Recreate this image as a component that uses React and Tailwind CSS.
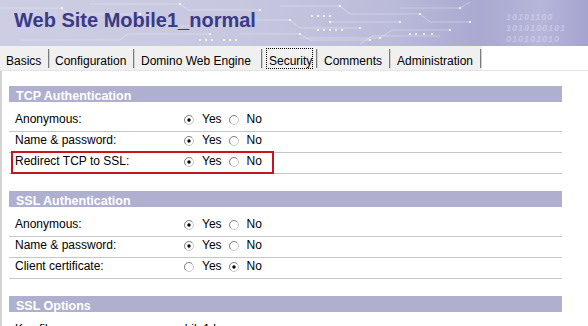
import React from 'react';

const SANS = "font-['Liberation_Sans',Arial,sans-serif]";

function Radio({ on }) {
  return (
    <svg width="10" height="10" viewBox="0 0 10 10" className="block">
      <circle cx="5" cy="5" r="4.5" fill="#fff" stroke="#c8c8c8" strokeWidth="1" />
      <path d="M1.8 8.2 A4.5 4.5 0 0 1 8.2 1.8" fill="none" stroke="#8a8a8a" strokeWidth="1" />
      {on && <circle cx="5" cy="5" r="1.7" fill="#000" />}
    </svg>
  );
}

function Circuit() {
  // faint circuit-board pattern in the banner
  const lines = [
    'M0 8 H60 L70 14 H140', 'M90 4 H180 L188 10 H260', 'M20 40 H120 L128 34 H210',
    'M200 20 H290 L300 28 H360', 'M280 6 H340 L350 14 H420 L430 22 H470',
    'M300 38 H380 L392 30 H450', 'M330 22 H400', 'M240 34 H300 L310 40 H370',
    'M150 26 H230', 'M400 8 H460 L470 2', 'M360 44 L372 36 H440',
  ];
  const dots = [
    [62, 8], [140, 14], [180, 4], [260, 10], [210, 34], [290, 20], [360, 28], [340, 6],
    [420, 14], [470, 22], [380, 38], [450, 30], [400, 22], [330, 22], [300, 34], [370, 40],
    [230, 26], [150, 26], [460, 8], [318, 30], [324, 30], [330, 30], [336, 30], [342, 30],
    [312, 16], [318, 16], [324, 16], [330, 16], [410, 34], [416, 34], [424, 34], [432, 34],
    [200, 40], [206, 40], [212, 40], [224, 40], [230, 40], [236, 40],
  ];
  return (
    <svg width="588" height="46" className="absolute left-0 top-0">
      {lines.map((d, i) => (
        <path key={i} d={d} fill="none" stroke="#ffffff" strokeOpacity="0.3" strokeWidth="1" />
      ))}
      {dots.map(([x, y], i) => (
        <rect key={i} x={x - 1} y={y - 1} width="2" height="2" fill="#ffffff" fillOpacity="0.75" />
      ))}
    </svg>
  );
}

function Row({ label, yes, value, marked }) {
  return (
    <div className="relative flex items-start h-[21px] border-b border-[#c6c6c6] text-[12px] text-black">
      <div className="w-[175px] pl-[6px] leading-[17px]">{label}</div>
      {value ? (
        <div className="-ml-[16px] leading-[17px]">{value}</div>
      ) : (
        <div className="flex items-center h-[17px]">
          <Radio on={yes} />
          <span className="ml-[8px] leading-[17px]">Yes</span>
          <span className="ml-[7px]"><Radio on={!yes} /></span>
          <span className="ml-[8px] leading-[17px]">No</span>
        </div>
      )}
      {marked && (
        <div className="absolute -top-[2px] left-[2px] w-[263px] h-[23px] border-2 border-[#c8141c]" />
      )}
    </div>
  );
}

function Section({ title, rows, className = '' }) {
  return (
    <div className={`ml-[7px] w-[553px] ${className}`}>
      <div className="h-[16px] bg-[#afafcf] pl-[7px] pt-[4px] leading-[12px] text-[12.5px] font-bold text-white">
        {title}
      </div>
      <div className="mt-[9px]">
        {rows.map((r) => (
          <Row key={r.label} {...r} />
        ))}
      </div>
    </div>
  );
}

function Sep() {
  return <div className="mt-[3px] h-[19px] w-[2px] border-l border-l-[#7c7c7c] border-r border-r-[#d0d0d0]" />;
}

export default function App() {
  return (
    <div className={`w-[588px] h-[326px] overflow-hidden bg-white ${SANS}`}>
      <div className="relative h-[46px] bg-[linear-gradient(90deg,#cdcde3_0%,#c7c7e0_40%,#bcbcda_65%,#a9a9d1_82%,#b6b6da_92%,#a4a4cf_100%)]">
        <Circuit />
        <div className="absolute right-[22px] top-[12px] text-[9px] italic font-bold leading-[11px] text-white/30 tracking-[1px]">
          <div>10101100</div>
          <div>1010100101</div>
          <div>010101010</div>
        </div>
        <div className="relative pl-[14px] pt-[10px] text-[20px] font-bold leading-[20px] text-[#3a3a86]">
          Web Site Mobile1_normal
        </div>
      </div>

      <div className="h-[25px] border-b border-[#e4e4e4]">
        <div className="inline-flex h-[24px] items-start bg-[#f0f0f0] text-[12px] text-black">
          <div className="w-[48px] pl-[6px] pt-[8px] leading-[14px]">Basics</div>
          <Sep />
          <div className="w-[83px] pl-[5px] pt-[8px] leading-[14px]">Configuration</div>
          <Sep />
          <div className="w-[126px] pl-[6px] pt-[8px] leading-[14px]">Domino Web Engine</div>
          <Sep />
          <div className="w-[53px]">
            <div className="ml-[3px] mt-[2px] h-[21px] w-[47px] border border-dotted border-black pl-[2px] pt-[5px] leading-[14px]">
              Security
            </div>
          </div>
          <Sep />
          <div className="w-[71px] pl-[6px] pt-[8px] leading-[14px]">Comments</div>
          <Sep />
          <div className="w-[89px] pl-[6px] pt-[8px] leading-[14px]">Administration</div>
          <Sep />
        </div>
      </div>

      <div className="border-l-2 border-[#d4d4d4] pt-[15px] pb-[40px]">
        <Section
          title="TCP Authentication"
          rows={[
            { label: 'Anonymous:', yes: true },
            { label: 'Name & password:', yes: true },
            { label: 'Redirect TCP to SSL:', yes: true, marked: true },
          ]}
        />
        <Section
          className="mt-[17px]"
          title="SSL Authentication"
          rows={[
            { label: 'Anonymous:', yes: true },
            { label: 'Name & password:', yes: true },
            { label: 'Client certificate:', yes: false },
          ]}
        />
        <Section
          className="mt-[17px]"
          title="SSL Options"
          rows={[{ label: 'Key file name:', value: 'mobile1.kyr' }]}
        />
      </div>
    </div>
  );
}
